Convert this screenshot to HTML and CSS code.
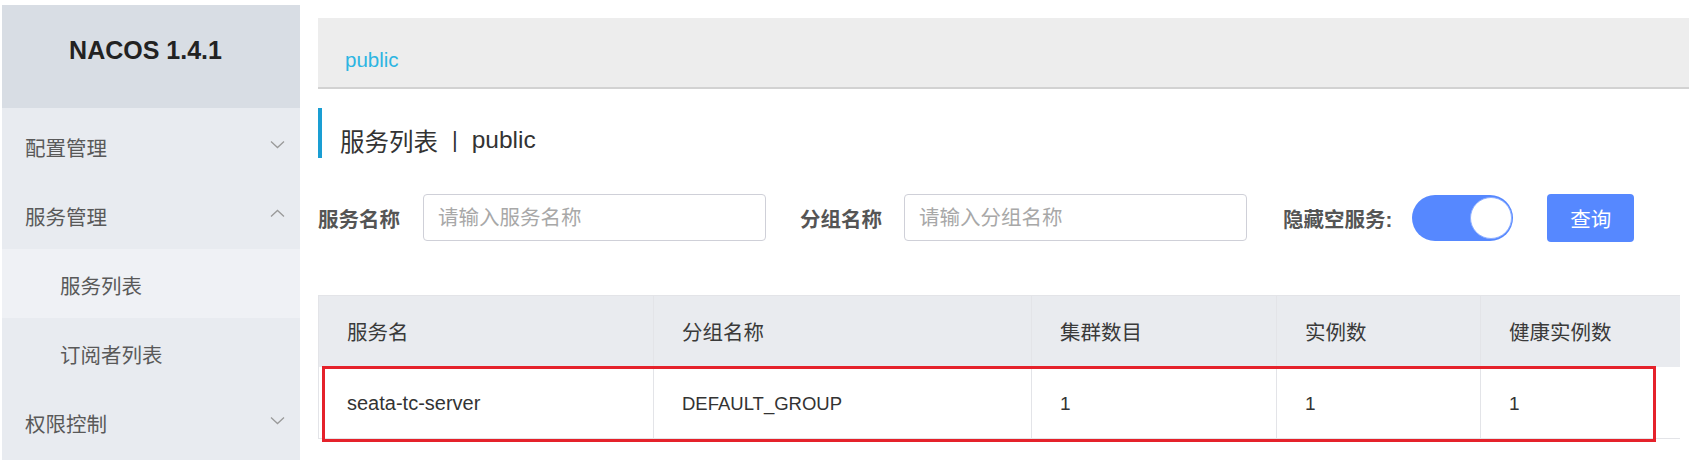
FILE: index.html
```html
<!DOCTYPE html>
<html lang="zh-CN">
<head>
<meta charset="utf-8">
<title>Nacos</title>
<link rel="stylesheet" href="styles.css">
</head>
<body>
<div class="app">
  <aside class="sidebar">
    <div class="brand">NACOS 1.4.1</div>
    <nav class="menu">
      <div class="menu-item"><span>配置管理</span><svg class="chev" width="15" height="9" viewBox="0 0 15 9"><polyline points="1,1.5 7.5,7.5 14,1.5"/></svg></div>
      <div class="menu-item"><span>服务管理</span><svg class="chev" width="15" height="9" viewBox="0 0 15 9"><polyline points="1,7.5 7.5,1.5 14,7.5"/></svg></div>
      <div class="menu-item sub active"><span>服务列表</span></div>
      <div class="menu-item sub"><span>订阅者列表</span></div>
      <div class="menu-item"><span>权限控制</span><svg class="chev" width="15" height="9" viewBox="0 0 15 9"><polyline points="1,1.5 7.5,7.5 14,1.5"/></svg></div>
    </nav>
  </aside>
  <main class="main">
    <div class="breadcrumb"><span>public</span></div>
    <div class="page-title"><span>服务列表</span><span class="sep">|</span><span>public</span></div>
    <div class="filters">
      <label class="field-label">服务名称</label>
      <input class="field-input" type="text" placeholder="请输入服务名称">
      <label class="field-label gap">分组名称</label>
      <input class="field-input" type="text" placeholder="请输入分组名称">
      <label class="field-label gap wide">隐藏空服务:</label>
      <div class="switch"><div class="knob"></div></div>
      <button class="btn">查询</button>
    </div>
    <div class="table-wrap">
      <table class="grid">
        <colgroup>
          <col class="c1"><col class="c2"><col class="c3"><col class="c4"><col class="c5">
        </colgroup>
        <thead>
          <tr><th>服务名</th><th>分组名称</th><th>集群数目</th><th>实例数</th><th>健康实例数</th></tr>
        </thead>
        <tbody>
          <tr><td class="name">seata-tc-server</td><td class="group">DEFAULT_GROUP</td><td class="num">1</td><td class="num">1</td><td class="num">1</td></tr>
        </tbody>
      </table>
      <div class="highlight"></div>
    </div>
  </main>
</div>
</body>
</html>
```

FILE: styles.css
```css
* { box-sizing: border-box; }
html, body { margin: 0; padding: 0; background: #fff; }
body {
  font-family: "Liberation Sans", "Noto Sans CJK SC", sans-serif;
  font-size: 20.5px;
  color: #333;
  width: 1689px;
  height: 460px;
  overflow: hidden;
}
.app {
  display: flex;
  padding: 5px 0 0 2px;
  height: 460px;
}
.sidebar {
  width: 298px;
  flex-shrink: 0;
  height: 455px;
  background: #e8ebf0;
  display: flex;
  flex-direction: column;
}
.brand {
  height: 103px;
  background: #d8dde4;
  display: flex;
  align-items: center;
  justify-content: center;
  padding: 0 11px 13px 0;
  font-weight: bold;
  font-size: 25px;
  color: #222;
}
.menu { padding-top: 3px; }
.menu-item {
  height: 69px;
  display: flex;
  align-items: center;
  justify-content: space-between;
  padding: 3px 15px 0 23px;
  color: #595959;
  font-size: 20.5px;
}
.menu-item.sub { padding-left: 58px; }
.menu-item.active { background: #eff1f5; }
.chev { fill: none; stroke: #9a9a9a; stroke-width: 1.3; margin-top: -5px; }

.main {
  flex: 1;
  padding: 13px 10px 0 18px;
  display: flex;
  flex-direction: column;
}
.breadcrumb {
  height: 71px;
  background: #ededed;
  border-bottom: 2px solid #d2d2d2;
  display: flex;
  align-items: center;
  padding: 14px 0 0 27px;
  color: #2db5e2;
  font-size: 20.5px;
  margin-right: -10px;
}
.page-title {
  margin-top: 19px;
  height: 50px;
  border-left: 4px solid #1a9ed3;
  display: flex;
  align-items: center;
  padding: 14px 0 0 18px;
  font-size: 24.5px;
  color: #333;
}
.sep { padding: 0 14px; font-size: 22px; }
.filters {
  margin-top: 36px;
  height: 47px;
  display: flex;
  align-items: center;
}
.field-label {
  font-weight: bold;
  color: #555;
  font-size: 20.5px;
  margin-right: 23px;
  white-space: nowrap;
}
.field-label.gap { margin-left: 34px; margin-right: 22px; }
.field-label.wide { margin-left: 36px; margin-right: 20px; }
.field-input {
  width: 343px;
  height: 47px;
  border: 1px solid #cfd0d8;
  border-radius: 4px;
  padding: 0 14px;
  font-family: inherit;
  font-size: 20.5px;
  color: #333;
  outline: none;
}
.field-input::placeholder { color: #a8a8a8; }
.switch {
  width: 101px;
  height: 46px;
  border-radius: 23px;
  background: #5688ff;
  display: flex;
  justify-content: flex-end;
  align-items: center;
  padding: 0 1px 0 0;
}
.knob {
  width: 42px;
  height: 42px;
  border-radius: 50%;
  background: #fff;
  border: 1px solid #8fb0ff;
}
.btn {
  margin-left: 34px;
  width: 87px;
  height: 48px;
  border: none;
  border-radius: 4px;
  background: #5688ff;
  color: #fff;
  font-family: inherit;
  font-size: 20.5px;
}
.table-wrap {
  position: relative;
  margin-top: 54px;
  width: 1361px;
}
.grid {
  width: 1361px;
  border-collapse: collapse;
  table-layout: fixed;
  border-left: 1px solid #e3e4e8;
}
.grid col.c1 { width: 335px; }
.grid col.c2 { width: 378px; }
.grid col.c3 { width: 245px; }
.grid col.c4 { width: 204px; }
.grid col.c5 { width: 199px; }
.grid th, .grid td {
  text-align: left;
  padding: 0 0 0 28px;
  border-right: 1px solid #e3e4e8;
  white-space: nowrap;
}
.grid th:last-child, .grid td:last-child { border-right: none; }
.grid th {
  height: 71px;
  background: #e9ebef;
  font-weight: normal;
  color: #3a3a3a;
  font-size: 20.5px;
  border-top: 1px solid #e3e4e8;
}
.grid td {
  height: 72px;
  padding-top: 3px;
  border-bottom: 1px solid #e3e4e8;
  color: #333;
}
.grid td.name { font-size: 20px; }
.grid td.group { font-size: 18.5px; }
.grid td.num { font-size: 19px; }
.highlight {
  position: absolute;
  left: 4px;
  top: 71px;
  width: 1334px;
  height: 76px;
  border: 3px solid #e5222b;
}
```
